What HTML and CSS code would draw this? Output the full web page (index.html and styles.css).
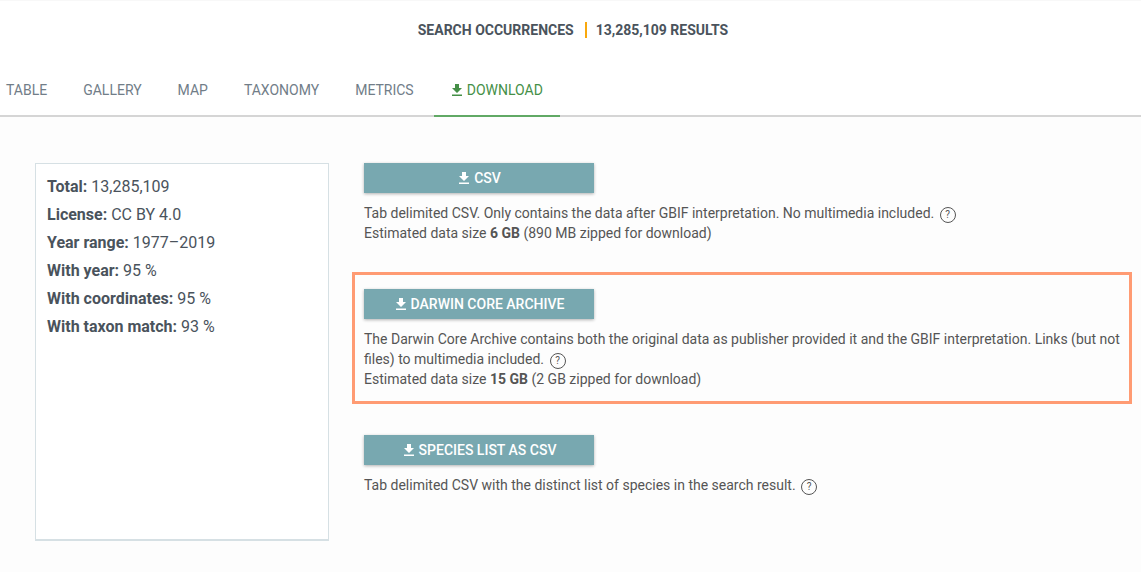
FILE: index.html
```html
<!DOCTYPE html>
<html lang="en">
<head>
<meta charset="utf-8">
<meta name="viewport" content="width=device-width, initial-scale=1">
<title>Search occurrences</title>
<link rel="stylesheet" href="styles.css">
</head>
<body>
<svg class="sprite" aria-hidden="true">
  <symbol id="download" viewBox="0 0 10 12">
    <path d="M3 0h4v4h3L5 9 0 4h3zM0 10.500h10v1.500H0z"/>
  </symbol>
</svg>
<header class="top">
  <h1 class="title"><span>Search occurrences</span><span class="count">13,285,109 results</span></h1>
  <nav class="tabs">
    <a class="tab" href="#table">Table</a>
    <a class="tab" href="#gallery">Gallery</a>
    <a class="tab" href="#map">Map</a>
    <a class="tab" href="#taxonomy">Taxonomy</a>
    <a class="tab" href="#metrics">Metrics</a>
    <a class="tab active" href="#download-tab" aria-current="page"><svg class="icon" aria-hidden="true"><use href="#download"/></svg>Download</a>
  </nav>
</header>
<main class="content">
  <aside class="summary">
    <p><b>Total:</b> 13,285,109</p>
    <p><b>License:</b> CC BY 4.0</p>
    <p><b>Year range:</b> 1977–2019</p>
    <p><b>With year:</b> 95 %</p>
    <p><b>With coordinates:</b> 95 %</p>
    <p><b>With taxon match:</b> 93 %</p>
  </aside>
  <div class="options">
    <section class="option">
      <button class="button" type="button"><svg class="icon" aria-hidden="true"><use href="#download"/></svg>CSV</button>
      <p>Tab delimited CSV. Only contains the data after GBIF interpretation. No multimedia included. <button class="help" type="button">?</button></p>
      <p>Estimated data size <b>6 GB</b> (890 MB zipped for download)</p>
    </section>
    <section class="option highlighted">
      <button class="button" type="button"><svg class="icon" aria-hidden="true"><use href="#download"/></svg>Darwin Core Archive</button>
      <p>The Darwin Core Archive contains both the original data as publisher provided it and the GBIF interpretation. Links (but not files) to multimedia included. <button class="help" type="button">?</button></p>
      <p>Estimated data size <b>15 GB</b> (2 GB zipped for download)</p>
    </section>
    <section class="option">
      <button class="button" type="button"><svg class="icon" aria-hidden="true"><use href="#download"/></svg>Species list as CSV</button>
      <p>Tab delimited CSV with the distinct list of species in the search result. <button class="help" type="button">?</button></p>
    </section>
  </div>
</main>
</body>
</html>
```
FILE: styles.css
```css
* {
  box-sizing: border-box;
}

body {
  margin: 0;
  background: #fdfdfd;
  color: #555;
  font: 14px/20px Roboto, "Liberation Sans", sans-serif;
}

p {
  margin: 0;
}

.sprite {
  display: none;
}

.icon {
  width: 10px;
  height: 12px;
  margin-right: 5px;
  fill: currentColor;
}

.top {
  background: #fff;
  border-top: 1px solid #f8f8f8;
}

.title {
  display: flex;
  justify-content: center;
  align-items: center;
  height: 58px;
  margin: 0;
  padding-left: 5px;
  color: #4a535c;
  font-size: 14px;
  line-height: 16px;
  font-weight: 700;
  text-transform: uppercase;
}

.count {
  margin-left: 11px;
  padding-left: 9px;
  border-left: 2px solid #f9a80d;
}

.tabs {
  display: flex;
  gap: 4px;
  height: 58px;
  box-shadow: inset 0 -2px #d5d5d5;
}

.tab {
  display: flex;
  align-items: center;
  padding: 4px 16px 0;
  color: #717d88;
  text-decoration: none;
  text-transform: uppercase;
}

.tab:first-child {
  padding-left: 6px;
}

.tab.active {
  padding-right: 17px;
  padding-left: 18px;
  color: #458f47;
  box-shadow: inset 0 -2px #61a965;
}

.content {
  display: flex;
  align-items: flex-start;
  gap: 23px;
  padding: 29px 9px 31px 35px;
}

.summary {
  flex: 0 0 294px;
  min-height: 378px;
  margin-top: 17px;
  padding: 9px 11px;
  background: #fff;
  border: 1px solid #d6e0e4;
  border-bottom-width: 2px;
  color: #4a535c;
  font-size: 16px;
  line-height: 28px;
}

.options {
  flex: 1;
  display: flex;
  flex-direction: column;
  gap: 14px;
}

.option {
  padding: 14px 9px 12px;
  border: 3px solid transparent;
}

.highlighted {
  border-color: #ff9b73;
}

.button {
  display: flex;
  align-items: center;
  justify-content: center;
  width: 230px;
  height: 30px;
  margin: 0 0 10px;
  padding: 0 0 0 2px;
  border: 0;
  background: #78a8b0;
  box-shadow: 0 1px 3px rgba(0, 0, 0, 0.3);
  color: #fff;
  font: 500 14px/20px Roboto, "Liberation Sans", sans-serif;
  text-transform: uppercase;
}

.help {
  width: 16px;
  height: 16px;
  margin: 0 0 0 2px;
  padding: 0;
  border: 1px solid #555;
  border-radius: 50%;
  background: none;
  color: #555;
  font: 10px/14px Roboto, "Liberation Sans", sans-serif;
  text-align: center;
}
```
